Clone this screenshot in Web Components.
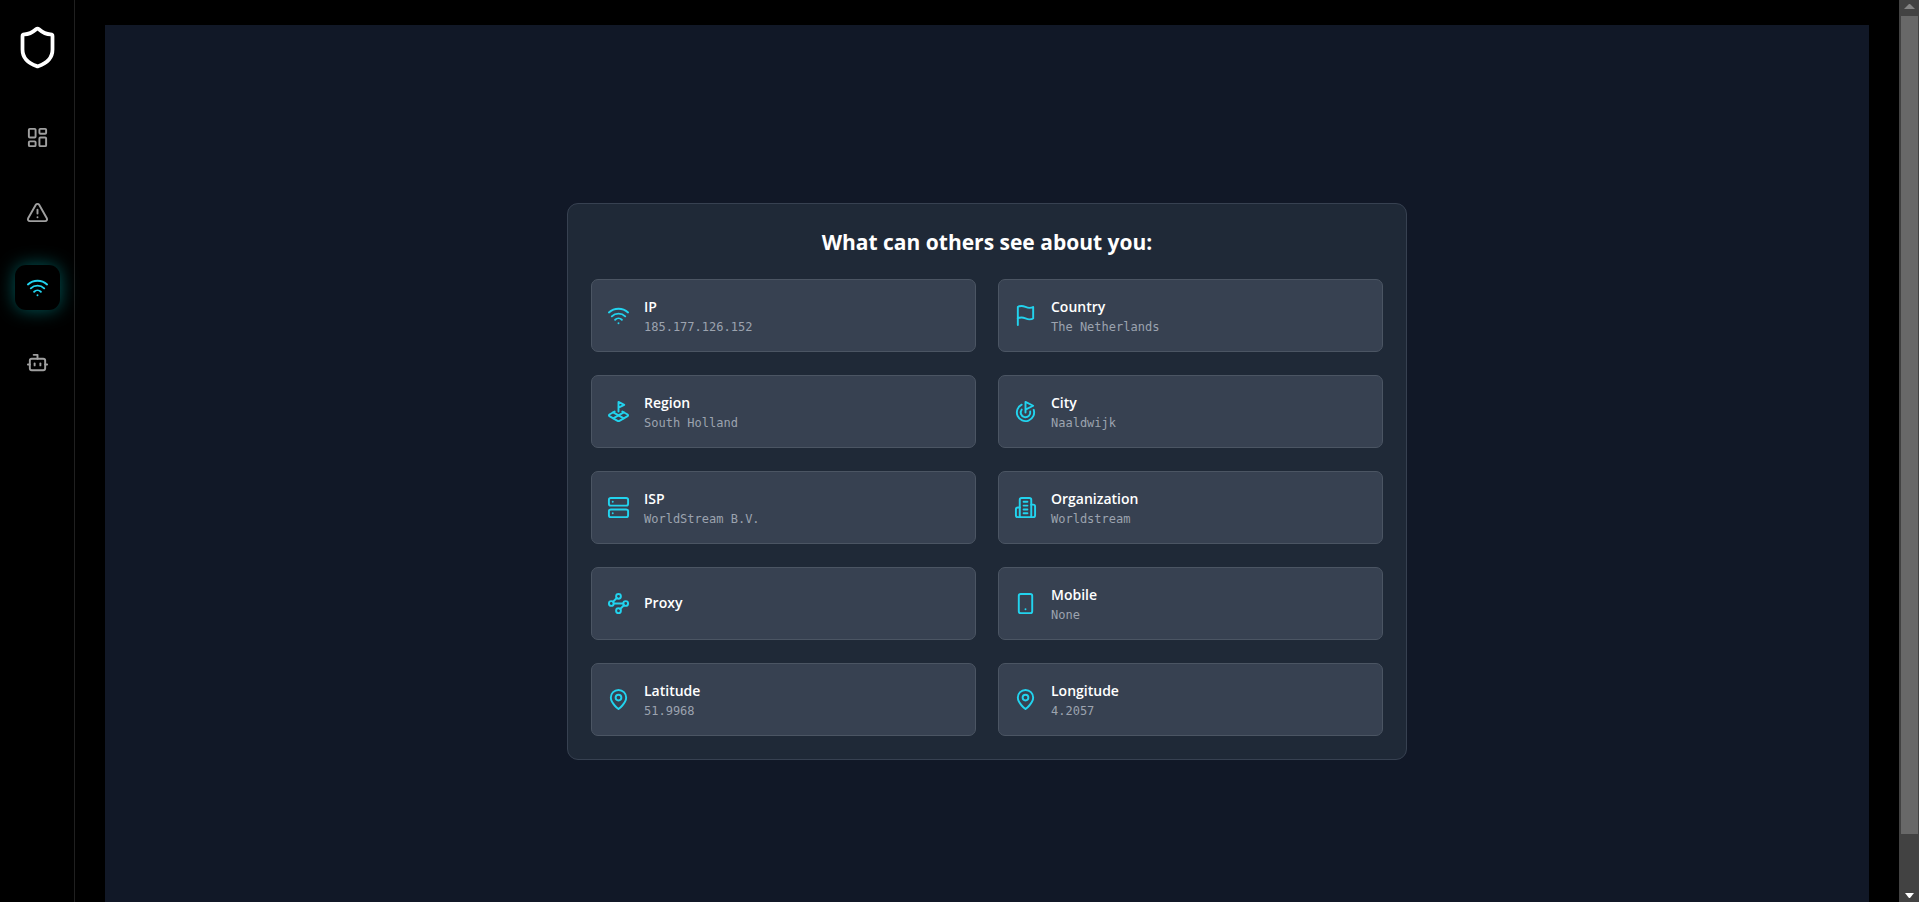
<!DOCTYPE html>
<html lang="en">
<head>
<meta charset="utf-8">
<meta name="viewport" content="width=device-width, initial-scale=1">
<title>Connection</title>
<style>
html, body { margin: 0; height: 100%; background: #000; }
body { overflow: hidden; font-family: "Open Sans", "Noto Sans", sans-serif; color: #fff; }
</style>
</head>
<body>
<app-shell>
  <app-sidebar slot="nav"></app-sidebar>
  <info-panel heading="What can others see about you:">
    <info-card icon="wifi" label="IP">185.177.126.152</info-card>
    <info-card icon="flag" label="Country">The Netherlands</info-card>
    <info-card icon="plot" label="Region">South Holland</info-card>
    <info-card icon="goal" label="City">Naaldwijk</info-card>
    <info-card icon="server" label="ISP">WorldStream B.V.</info-card>
    <info-card icon="building" label="Organization">Worldstream</info-card>
    <info-card icon="waypoints" label="Proxy"></info-card>
    <info-card icon="phone" label="Mobile">None</info-card>
    <info-card icon="pin" label="Latitude">51.9968</info-card>
    <info-card icon="pin" label="Longitude">4.2057</info-card>
  </info-panel>
  <scroll-rail slot="rail"></scroll-rail>
</app-shell>

<script>
const ICONS = {
  shield: '<path d="M20 13c0 5-3.5 7.5-7.66 8.95a1 1 0 0 1-.67-.01C7.5 20.5 4 18 4 13V6a1 1 0 0 1 1-1c2 0 4.500-1.200 6.240-2.720a1.170 1.170 0 0 1 1.520 0C14.510 3.810 17 5 19 5a1 1 0 0 1 1 1z"/>',
  dashboard: '<rect width="7" height="9" x="3" y="3" rx="1"/><rect width="7" height="5" x="14" y="3" rx="1"/><rect width="7" height="9" x="14" y="12" rx="1"/><rect width="7" height="5" x="3" y="16" rx="1"/>',
  alert: '<path d="m21.73 18-8-14a2 2 0 0 0-3.48 0l-8 14A2 2 0 0 0 4 21h16a2 2 0 0 0 1.73-3"/><path d="M12 9v4"/><path d="M12 17h.01"/>',
  wifi: '<path d="M12 20h.01"/><path d="M2 8.82a15 15 0 0 1 20 0"/><path d="M5 12.859a10 10 0 0 1 14 0"/><path d="M8.5 16.429a5 5 0 0 1 7 0"/>',
  bot: '<path d="M12 8V4H8"/><rect width="16" height="12" x="4" y="8" rx="2"/><path d="M2 14h2"/><path d="M20 14h2"/><path d="M15 13v2"/><path d="M9 13v2"/>',
  flag: '<path d="M4 15s1-1 4-1 5 2 8 2 4-1 4-1V3s-1 1-4 1-5-2-8-2-4 1-4 1z"/><path d="M4 22v-7"/>',
  plot: '<path d="m12 8 6-3-6-3v10"/><path d="m8 11.990-5.500 3.140a1 1 0 0 0 0 1.740l8.500 4.860a2 2 0 0 0 2 0l8.500-4.860a1 1 0 0 0 0-1.740L16 12"/><path d="m6.490 12.850 11.020 6.300"/><path d="M17.510 12.850 6.500 19.150"/>',
  goal: '<path d="M12 13V2l8 4-8 4"/><path d="M20.561 10.222a9 9 0 1 1-12.550-5.290"/><path d="M8.002 9.997a5 5 0 1 0 8.900 2.020"/>',
  server: '<rect width="20" height="8" x="2" y="2" rx="2"/><rect width="20" height="8" x="2" y="14" rx="2"/><path d="M6 6h.01"/><path d="M6 18h.01"/>',
  building: '<path d="M6 22V4a2 2 0 0 1 2-2h8a2 2 0 0 1 2 2v18Z"/><path d="M6 12H4a2 2 0 0 0-2 2v6a2 2 0 0 0 2 2h2"/><path d="M18 9h2a2 2 0 0 1 2 2v9a2 2 0 0 1-2 2h-2"/><path d="M10 6h4"/><path d="M10 10h4"/><path d="M10 14h4"/><path d="M10 18h4"/>',
  waypoints: '<circle cx="12" cy="4.5" r="2.5"/><path d="m10.200 6.300-3.900 3.900"/><circle cx="4.5" cy="12" r="2.5"/><path d="M7 12h10"/><circle cx="19.5" cy="12" r="2.5"/><path d="m13.800 17.700 3.900-3.900"/><circle cx="12" cy="19.5" r="2.5"/>',
  phone: '<rect width="14" height="20" x="5" y="2" rx="2"/><path d="M12 18h.01"/>',
  pin: '<path d="M20 10c0 6-8 12-8 12s-8-6-8-12a8 8 0 0 1 16 0Z"/><circle cx="12" cy="10" r="3"/>'
};

class Base extends HTMLElement {
  connectedCallback() {
    if (!this.shadowRoot) this.attachShadow({ mode: 'open' }).innerHTML = this.view();
  }
}

customElements.define('line-icon', class extends Base {
  view() {
    return `<style>
      :host { display: block; flex: none; width: 23px; height: 23px; }
      svg { display: block; width: 100%; height: 100%; }
    </style>
    <svg viewBox="0 0 24 24" fill="none" stroke="currentColor" stroke-width="2" stroke-linecap="round" stroke-linejoin="round" aria-hidden="true">${ICONS[this.getAttribute('name')]}</svg>`;
  }
});

customElements.define('app-shell', class extends Base {
  view() {
    return `<style>
      :host { display: grid; grid-template-columns: auto minmax(0, 1fr) auto; height: 100vh; overflow: hidden; }
      .page { overflow: hidden; padding: 25px 30px; }
      main { display: grid; place-items: center; min-height: calc(100vh + 10px); background: #111827; }
    </style>
    <slot name="nav"></slot>
    <div class="page"><main><slot></slot></main></div>
    <slot name="rail"></slot>`;
  }
});

customElements.define('app-sidebar', class extends Base {
  view() {
    return `<style>
      :host { display: block; width: 74px; border-right: 1px solid #202020; background: #000; }
      .logo { display: grid; place-items: center; padding-top: 25px; color: #fff; }
      .logo line-icon { width: 45px; height: 45px; }
      nav { display: grid; justify-content: center; gap: 30px; padding-top: 45px; }
    </style>
    <a class="logo" href="#" aria-label="Home"><line-icon name="shield"></line-icon></a>
    <nav aria-label="Main">
      <nav-link icon="dashboard" label="Dashboard"></nav-link>
      <nav-link icon="alert" label="Alerts"></nav-link>
      <nav-link icon="wifi" label="Connection" active></nav-link>
      <nav-link icon="bot" label="Assistant"></nav-link>
    </nav>`;
  }
});

customElements.define('nav-link', class extends Base {
  view() {
    return `<style>
      :host { display: block; }
      a { display: grid; place-items: center; width: 45px; height: 45px; border-radius: 11px; color: #a0a0a0; }
      :host([active]) a { color: #22d3ee; background: #000; box-shadow: 0 0 18px rgba(0, 255, 255, .35); }
    </style>
    <a href="#" aria-label="${this.getAttribute('label')}"><line-icon name="${this.getAttribute('icon')}"></line-icon></a>`;
  }
});

customElements.define('info-panel', class extends Base {
  view() {
    return `<style>
      :host { display: block; box-sizing: border-box; width: 100%; max-width: 840px; padding: 23px; border: 1px solid #374151; border-radius: 11px; background: #1f2937; }
      h1 { margin: 0 0 22px; font-size: 21px; line-height: 30px; font-weight: 700; text-align: center; }
      .grid { display: grid; grid-template-columns: repeat(2, minmax(0, 1fr)); gap: 23px 22px; }
    </style>
    <h1>${this.getAttribute('heading')}</h1>
    <div class="grid"><slot></slot></div>`;
  }
});

customElements.define('info-card', class extends Base {
  view() {
    return `<style>
      :host { display: flex; align-items: center; gap: 14px; box-sizing: border-box; min-height: 73px; padding: 15px; border: 1px solid #4b5563; border-radius: 7px; background: #374151; }
      line-icon { color: #22d3ee; }
      h2 { margin: 0; font-size: 14px; line-height: 24px; font-weight: 600; }
      p { margin: 0; font: 12px/16px "DejaVu Sans Mono", monospace; color: #9ca3af; }
    </style>
    <line-icon name="${this.getAttribute('icon')}"></line-icon>
    <div><h2>${this.getAttribute('label')}</h2>${this.textContent.trim() ? '<p><slot></slot></p>' : ''}</div>`;
  }
});

customElements.define('scroll-rail', class extends Base {
  view() {
    return `<style>
      :host { display: grid; grid-template-rows: 16px minmax(0, 1fr) 16px; width: 20px; background: #424242; }
      svg { display: block; width: 20px; height: 16px; }
      .track { padding: 0 1px 0 2px; }
      .thumb { height: 94%; background: #686868; }
    </style>
    <svg viewBox="0 0 20 16" fill="#858585" aria-hidden="true"><path d="M10 4h1l5 5H5z"/></svg>
    <div class="track"><div class="thumb"></div></div>
    <svg viewBox="0 0 20 16" fill="#fff" aria-hidden="true"><path d="M6 7h9l-4 5h-1z"/></svg>`;
  }
});
</script>
</body>
</html>
